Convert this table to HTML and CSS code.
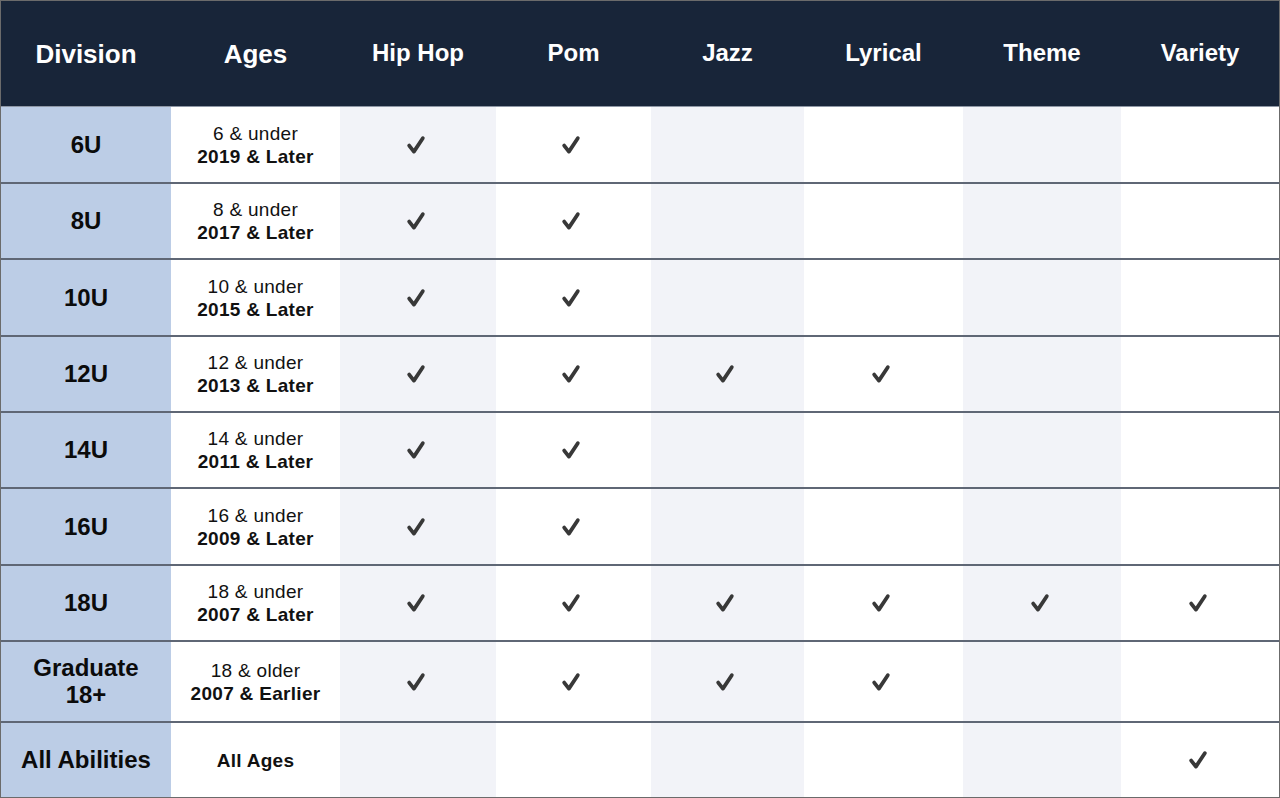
FILE: index.html
```html
<!DOCTYPE html>
<html lang="en">
<head>
<meta charset="utf-8">
<title>Divisions</title>
<link rel="stylesheet" href="styles.css">
</head>
<body>
<svg width="0" height="0" class="defs" aria-hidden="true">
  <symbol id="chk" viewBox="0 0 20 20">
    <path d="M3.2 10.6 L7.9 16.6 L16.8 3.2" fill="none" stroke="currentColor" stroke-width="3.8" stroke-linecap="round" stroke-linejoin="round"/>
  </symbol>
</svg>
<div class="table">
  <div class="row head">
    <div class="c big">Division</div>
    <div class="c big">Ages</div>
    <div class="c">Hip Hop</div>
    <div class="c">Pom</div>
    <div class="c">Jazz</div>
    <div class="c">Lyrical</div>
    <div class="c">Theme</div>
    <div class="c">Variety</div>
  </div>

  <div class="row first h76">
    <div class="c dv">6U</div>
    <div class="c ag"><span>6 &amp; under</span><b>2019 &amp; Later</b></div>
    <div class="c s"><svg class="ck"><use href="#chk"/></svg></div>
    <div class="c"><svg class="ck"><use href="#chk"/></svg></div>
    <div class="c s"></div>
    <div class="c"></div>
    <div class="c s"></div>
    <div class="c"></div>
  </div>

  <div class="row h76">
    <div class="c dv">8U</div>
    <div class="c ag"><span>8 &amp; under</span><b>2017 &amp; Later</b></div>
    <div class="c s"><svg class="ck"><use href="#chk"/></svg></div>
    <div class="c"><svg class="ck"><use href="#chk"/></svg></div>
    <div class="c s"></div>
    <div class="c"></div>
    <div class="c s"></div>
    <div class="c"></div>
  </div>

  <div class="row h77">
    <div class="c dv">10U</div>
    <div class="c ag"><span>10 &amp; under</span><b>2015 &amp; Later</b></div>
    <div class="c s"><svg class="ck"><use href="#chk"/></svg></div>
    <div class="c"><svg class="ck"><use href="#chk"/></svg></div>
    <div class="c s"></div>
    <div class="c"></div>
    <div class="c s"></div>
    <div class="c"></div>
  </div>

  <div class="row h76">
    <div class="c dv">12U</div>
    <div class="c ag"><span>12 &amp; under</span><b>2013 &amp; Later</b></div>
    <div class="c s"><svg class="ck"><use href="#chk"/></svg></div>
    <div class="c"><svg class="ck"><use href="#chk"/></svg></div>
    <div class="c s"><svg class="ck"><use href="#chk"/></svg></div>
    <div class="c"><svg class="ck"><use href="#chk"/></svg></div>
    <div class="c s"></div>
    <div class="c"></div>
  </div>

  <div class="row h76">
    <div class="c dv">14U</div>
    <div class="c ag"><span>14 &amp; under</span><b>2011 &amp; Later</b></div>
    <div class="c s"><svg class="ck"><use href="#chk"/></svg></div>
    <div class="c"><svg class="ck"><use href="#chk"/></svg></div>
    <div class="c s"></div>
    <div class="c"></div>
    <div class="c s"></div>
    <div class="c"></div>
  </div>

  <div class="row h77">
    <div class="c dv">16U</div>
    <div class="c ag"><span>16 &amp; under</span><b>2009 &amp; Later</b></div>
    <div class="c s"><svg class="ck"><use href="#chk"/></svg></div>
    <div class="c"><svg class="ck"><use href="#chk"/></svg></div>
    <div class="c s"></div>
    <div class="c"></div>
    <div class="c s"></div>
    <div class="c"></div>
  </div>

  <div class="row h76">
    <div class="c dv">18U</div>
    <div class="c ag"><span>18 &amp; under</span><b>2007 &amp; Later</b></div>
    <div class="c s"><svg class="ck"><use href="#chk"/></svg></div>
    <div class="c"><svg class="ck"><use href="#chk"/></svg></div>
    <div class="c s"><svg class="ck"><use href="#chk"/></svg></div>
    <div class="c"><svg class="ck"><use href="#chk"/></svg></div>
    <div class="c s"><svg class="ck"><use href="#chk"/></svg></div>
    <div class="c"><svg class="ck"><use href="#chk"/></svg></div>
  </div>

  <div class="row h81">
    <div class="c dv two"><span>Graduate</span><span>18+</span></div>
    <div class="c ag"><span>18 &amp; older</span><b>2007 &amp; Earlier</b></div>
    <div class="c s"><svg class="ck"><use href="#chk"/></svg></div>
    <div class="c"><svg class="ck"><use href="#chk"/></svg></div>
    <div class="c s"><svg class="ck"><use href="#chk"/></svg></div>
    <div class="c"><svg class="ck"><use href="#chk"/></svg></div>
    <div class="c s"></div>
    <div class="c"></div>
  </div>

  <div class="row h76">
    <div class="c dv">All Abilities</div>
    <div class="c ag"><b>All Ages</b></div>
    <div class="c s"></div>
    <div class="c"></div>
    <div class="c s"></div>
    <div class="c"></div>
    <div class="c s"></div>
    <div class="c"><svg class="ck"><use href="#chk"/></svg></div>
  </div>
</div>
</body>
</html>
```

FILE: styles.css
```css
* { box-sizing: border-box; }
html, body { margin: 0; padding: 0; background: #ffffff; }
body { font-family: "Liberation Sans", Arial, sans-serif; color: #111; }
.defs { position: absolute; }

.table {
  width: 1280px;
  height: 798px;
  border: 1px solid #6b6b6b;
  display: flex;
  flex-direction: column;
  overflow: hidden;
}

.row {
  display: grid;
  grid-template-columns: 170px 169px 156px 155px 153px 159px 158px 158px;
  border-top: 2px solid #5f6775;
}
.row.head {
  height: 105px;
  border-top: none;
  background: #182539;
  color: #ffffff;
  font-weight: bold;
  font-size: 24px;
}
.row.first { border-top: 1px solid #8e97a5; }
.h76 { height: 76px; }
.h77 { height: 77px; }
.h81 { height: 81px; }

.c {
  display: flex;
  align-items: center;
  justify-content: center;
  text-align: center;
}
.head .c { padding-bottom: 1px; }
.head .big { font-size: 26px; padding-bottom: 0; padding-top: 1px; }

.dv {
  background: #bccde6;
  font-weight: bold;
  font-size: 24px;
  color: #0b0b0b;
}
.two { flex-direction: column; line-height: 27px; padding-bottom: 2px; }

.ag {
  flex-direction: column;
  font-size: 19px;
  letter-spacing: 0.3px;
  line-height: 23px;
  color: #111;
}
.ag span { font-weight: normal; }
.ag b { font-weight: bold; }

.s { background: #f2f3f8; }

.ck {
  width: 20px;
  height: 20px;
  color: #383838;
  margin-right: 5px;
}
```
